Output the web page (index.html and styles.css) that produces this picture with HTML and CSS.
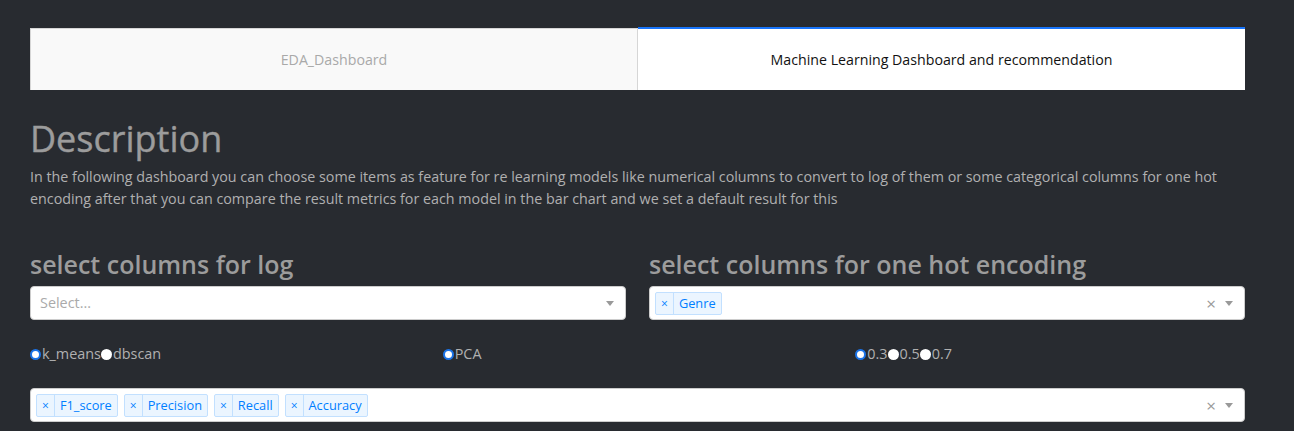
FILE: index.html
```html
<!DOCTYPE html>
<html lang="en">
<head>
<meta charset="utf-8">
<title>Dashboard</title>
<link rel="stylesheet" href="styles.css">
</head>
<body>
<div class="page">
  <div class="tabs">
    <div class="tab">EDA_Dashboard</div>
    <div class="tab tab--selected">Machine Learning Dashboard and recommendation</div>
  </div>

  <h1 class="title">Description</h1>
  <p class="desc">In the following dashboard you can choose some items as feature for re learning models like numerical columns to convert to log of them or some categorical columns for one hot encoding after that you can compare the result metrics for each model in the bar chart and we set a default result for this</p>

  <div class="row2">
    <div class="col">
      <h3 class="subtitle">select columns for log</h3>
      <div class="select">
        <div class="select-values"><span class="placeholder">Select...</span></div>
        <span class="arrow"></span>
      </div>
    </div>
    <div class="col">
      <h3 class="subtitle">select columns for one hot encoding</h3>
      <div class="select">
        <div class="select-values">
          <span class="tag"><span class="tag-x">×</span><span class="tag-label">Genre</span></span>
        </div>
        <span class="clear">×</span>
        <span class="arrow"></span>
      </div>
    </div>
  </div>

  <div class="row3">
    <div class="radios">
      <label class="radio"><span class="dot dot--on"></span>k_means</label>
      <label class="radio"><span class="dot"></span>dbscan</label>
    </div>
    <div class="radios">
      <label class="radio"><span class="dot dot--on"></span>PCA</label>
    </div>
    <div class="radios">
      <label class="radio"><span class="dot dot--on"></span>0.3</label>
      <label class="radio"><span class="dot"></span>0.5</label>
      <label class="radio"><span class="dot"></span>0.7</label>
    </div>
  </div>

  <div class="select select--multi">
    <div class="select-values">
      <span class="tag"><span class="tag-x">×</span><span class="tag-label">F1_score</span></span>
      <span class="tag"><span class="tag-x">×</span><span class="tag-label">Precision</span></span>
      <span class="tag"><span class="tag-x">×</span><span class="tag-label">Recall</span></span>
      <span class="tag"><span class="tag-x">×</span><span class="tag-label">Accuracy</span></span>
    </div>
    <span class="clear">×</span>
    <span class="arrow"></span>
  </div>
</div>
</body>
</html>
```

FILE: styles.css
```css
html, body {
  margin: 0;
  padding: 0;
  background: #282b30;
  height: 100%;
}
body {
  font-family: "Open Sans", "Noto Sans", sans-serif;
  font-size: 14.4px;
  line-height: 21.6px;
  color: #b3b3b3;
  overflow: hidden;
}
.page {
  width: 1215px;
  padding: 27px 0 0 30px;
}
.tabs {
  display: flex;
  height: 63px;
}
.tab {
  flex: 0 0 608px;
  box-sizing: border-box;
  display: flex;
  align-items: center;
  justify-content: center;
  background: #f9f9f9;
  border: 1px solid #d6d6d6;
  border-bottom: none;
  margin-top: 1px;
  color: #a9a9a9;
  font-size: 14.2px;
}
.tab--selected {
  flex: 1 1 auto;
  margin-top: 0;
  background: #ffffff;
  border: none;
  border-top: 2px solid #1975fa;
  color: #111111;
}
.title {
  margin: 27px 0 0;
  font-size: 36px;
  line-height: 43px;
  font-weight: 500;
  color: #9c9c9c;
  -webkit-text-stroke: 0.4px #9c9c9c;
}
.desc {
  margin: 6px 0 0;
  font-size: 14.3px;
  color: #b0b0b0;
}
.row2 {
  display: flex;
  gap: 23px;
  margin-top: 40px;
}
.col {
  flex: 1 1 0;
}
.subtitle {
  margin: 0 0 7px;
  font-size: 25px;
  line-height: 30px;
  font-weight: 600;
  color: #9c9c9c;
}
.select {
  box-sizing: border-box;
  height: 34px;
  background: #fff;
  border: 1px solid #cccccc;
  border-radius: 4px;
  display: flex;
  align-items: center;
  padding-right: 11px;
}
.select-values {
  flex: 1 1 auto;
  display: flex;
  align-items: center;
  gap: 6px;
  padding-left: 5px;
}
.placeholder {
  padding-left: 4px;
  color: #aaaaaa;
}
.arrow {
  width: 0;
  height: 0;
  border-style: solid;
  border-width: 5px 4.5px 0;
  border-color: #999 transparent transparent;
  margin-left: 9px;
}
.clear {
  color: #999;
  font-size: 17px;
  line-height: 1;
}
.tag {
  display: inline-flex;
  align-items: stretch;
  height: 23px;
  box-sizing: border-box;
  background: #ebf5ff;
  border: 1px solid #c2e0ff;
  border-radius: 2px;
  color: #007eff;
  font-size: 12.8px;
  line-height: 21px;
}
.tag-x {
  padding: 0 5px;
  border-right: 1px solid #c2e0ff;
  font-size: 12px;
}
.tag-label {
  padding: 0 5px;
}
.row3 {
  display: flex;
  gap: 23px;
  height: 68px;
  align-items: center;
}
.radios {
  flex: 1 1 0;
  display: flex;
  align-items: center;
}
.radio {
  display: inline-flex;
  align-items: center;
  color: #b0b0b0;
}
.dot {
  box-sizing: border-box;
  width: 11px;
  height: 11px;
  border-radius: 50%;
  background: #ffffff;
  margin-right: 1px;
}
.dot--on {
  border: 2px solid #1a73e8;
}
.select--multi {
  width: 1215px;
}
```
